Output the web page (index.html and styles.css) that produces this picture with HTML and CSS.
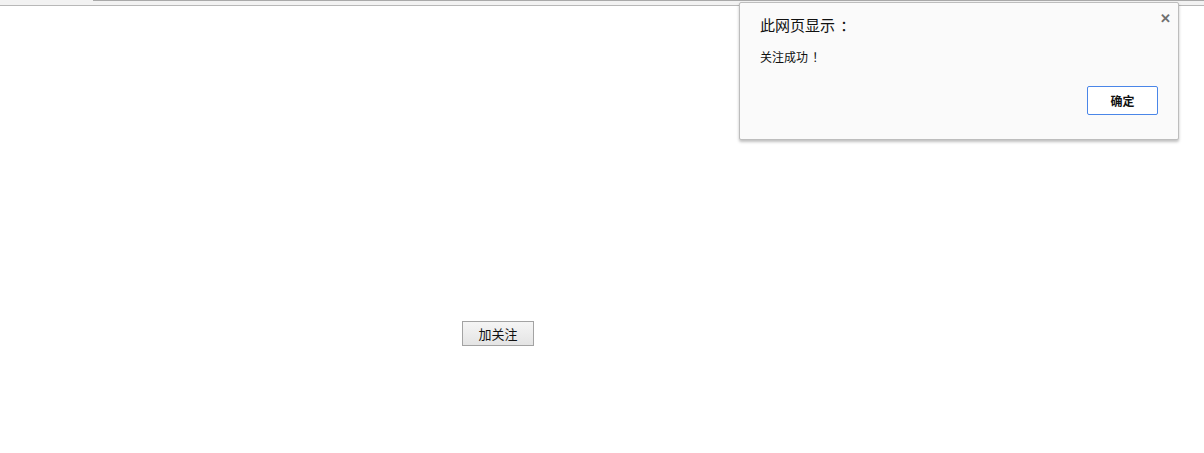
FILE: index.html
```html
<!DOCTYPE html>
<html lang="zh-CN">
<head>
    <meta charset="UTF-8">
    <title>加关注</title>
    <link rel="stylesheet" href="styles.css">
</head>
<body>
    <div class="topbar">
        <div class="tab"></div>
        <div class="rest"></div>
    </div>
    <div class="page">
        <button class="follow">加关注</button>
    </div>
    <div class="dialog">
        <span class="close">&#x2715;</span>
        <div class="title">此网页显示<span class="punct">：</span></div>
        <div class="msg">关注成功<span class="punct">！</span></div>
        <div class="actions">
            <button class="ok">确定</button>
        </div>
    </div>
</body>
</html>
```
FILE: styles.css
```css
*{
    margin: 0;
    padding: 0;
}
body{
    width: 1204px;
    height: 453px;
    background: #fff;
    font-family: "Microsoft YaHei", "Noto Sans CJK SC", sans-serif;
    position: relative;
    overflow: hidden;
}
.topbar{
    display: flex;
    height: 5px;
    border-bottom: 1px solid #b8b8b8;
    background: #f2f2f2;
}
.tab{
    width: 93px;
}
.rest{
    flex: 1;
    height: 1px;
    background: #a9a9a9;
}
.page{
    padding: 314px 0 0 462px;
}
.follow{
    width: 72px;
    height: 25px;
    font-family: inherit;
    font-size: 13px;
    color: #111;
    border: 1px solid #a3a3a3;
    border-radius: 0;
    background: linear-gradient(#f5f5f5, #e4e4e4);
}
.dialog{
    position: absolute;
    left: 739px;
    top: 2px;
    width: 438px;
    height: 136px;
    background: #fafafa;
    border: 1px solid #bdbdbd;
    border-radius: 2px;
    box-shadow: 0 2px 3px rgba(0,0,0,0.25);
}
.close{
    position: absolute;
    right: 7px;
    top: 5px;
    font-size: 13px;
    font-weight: bold;
    color: #6f6f6f;
}
.title{
    padding: 11px 0 0 20px;
    font-size: 15px;
    line-height: 22px;
    color: #111;
}
.msg{
    padding: 12px 0 0 20px;
    font-size: 12px;
    color: #111;
}
/* 全角标点居中 */
.punct{
    margin-left: 0.35em;
}
.actions{
    display: flex;
    justify-content: flex-end;
    padding: 21px 20px 0 0;
}
.ok{
    width: 71px;
    height: 29px;
    font-family: inherit;
    font-size: 12px;
    font-weight: bold;
    color: #111;
    background: #fff;
    border: 1px solid #4a86e8;
    border-radius: 2px;
}
```
